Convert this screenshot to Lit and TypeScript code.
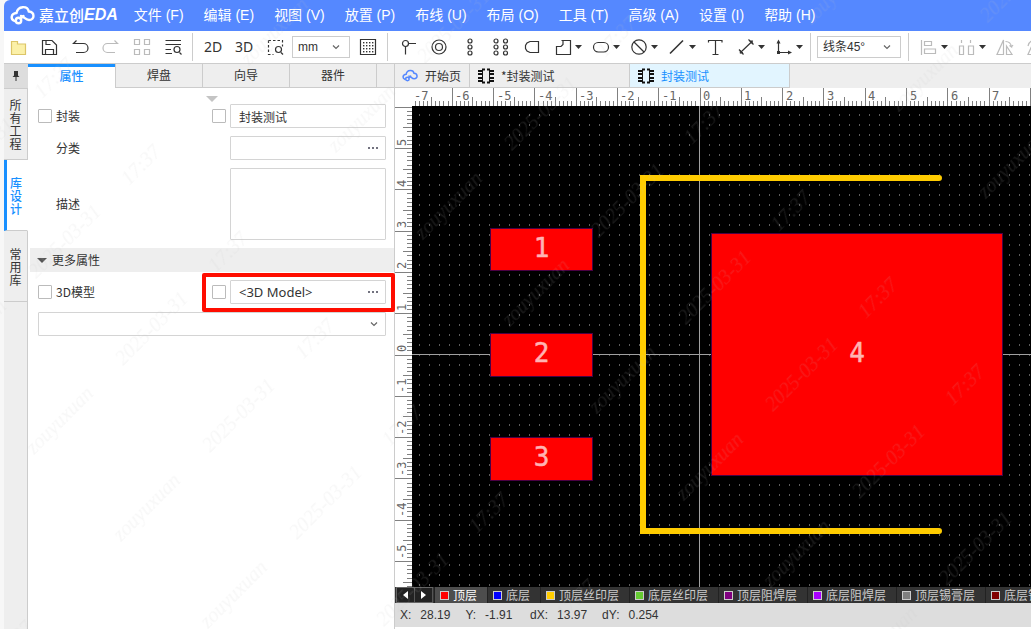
import { LitElement, html, svg, css } from "lit";
import { customElement, property, state } from "lit/decorators.js";
import { classMap } from "lit/directives/class-map.js";

const MENUS = ["文件 (F)", "编辑 (E)", "视图 (V)", "放置 (P)", "布线 (U)", "布局 (O)", "工具 (T)", "高级 (A)", "设置 (I)", "帮助 (H)"];

const circles = (pts: number[][], r: number) => pts.map(([x, y]) => svg`<circle cx=${x} cy=${y} r=${r} />`);

// Toolbar glyphs, all drawn on a 24 x 24 board.
const ICONS: Record<string, unknown> = {
  folder: svg`<path d="M5.5 6.500h6v2.500h8v10.500h-14z" fill="#fbf0a8" stroke="#dcc568"/>`,
  save: svg`<path d="M5.500 5.500h9.500l4.500 4.500v9.500h-14z"/><path d="M8.500 19.500v-5h8v5M9 5.500v4h4.500"/>`,
  undo: svg`<path d="M8.500 5.500L5.500 8.500H15.500a4.500 4.500 0 0 1 0 9H8"/>`,
  redo: svg`<path d="M15.500 5.500L18.500 8.500H8.500a4.500 4.500 0 0 0 0 9H16"/>`,
  cells: svg`<path d="M4.500 4.500h5v5h-5zM14.500 4.500h5v5h-5zM4.500 14.500h5v5h-5zM14.500 14.500h5v5h-5z"/>`,
  find: svg`<path d="M4.500 5.500H20M4.500 9.500H20M4.500 14.500H10M4.500 18.500H11M18.500 17.500L20.500 19.500"/><circle cx="16" cy="14.500" r="3"/>`,
  area: svg`<path d="M5.500 5.500h14v6M5.500 5.500v14h5" stroke-dasharray="2.500 2"/><circle cx="15.500" cy="14.500" r="3"/><path d="M18 17.500L20 19.500"/>`,
  grid: svg`<path d="M4.500 4.500h15v15h-15z"/><g fill="#333" stroke="none">${[7, 10, 13, 16].map((y) => [7, 10, 13, 16].map((x) => svg`<rect x=${x} y=${y} width="1.400" height="1.400"/>`))}</g>`,
  pin: svg`<circle cx="9.500" cy="8.500" r="3"/><path d="M12.500 8.500H20M9.500 11.500V19.500"/>`,
  ring: svg`<circle cx="12" cy="12" r="7"/><circle cx="12" cy="12" r="3.500"/>`,
  pads3: circles([[12, 6], [12, 12], [12, 18]], 2),
  pads6: circles([[7, 6], [7, 12], [7, 18], [16.5, 6], [16.5, 12], [16.5, 18]], 2),
  dshape: svg`<path d="M18.500 6.500v11H10l-3-1.500-1.500-2.500v-3L7 8l3-1.500z"/>`,
  poly: svg`<path d="M10.500 5.500h9v14h-14v-8h4.500l2-2V5.500"/>`,
  oval: svg`<rect x="4.500" y="7.500" width="15" height="9.500" rx="4.700"/>`,
  forbid: svg`<circle cx="12" cy="12" r="7.200"/><path d="M7 7L17 17"/>`,
  line: svg`<path d="M5 18.500L18 5.500" stroke-width="1.600"/>`,
  text: svg`<path d="M5.500 7.500v-2h13.500v2M12.500 5.500v13.500M9.500 19.500h6"/>`,
  measure: svg`<path d="M7 17L17.500 7M5 14.500L9.500 19.500M14.500 4.500L19.500 9.500"/><path d="M6 18.300l.3-3 2.700 2.700zM18.600 5.700l-3 .3 2.700 2.700z" fill="#333" stroke-width="0.600"/>`,
  axes: svg`<path d="M6.500 6V17.500H18"/><path d="M4.500 8.500l2-4 2 4zM16 15.500l4 2-4 2z" fill="#333" stroke="none"/><rect x="5" y="16" width="3" height="3" fill="#333" stroke="none"/>`,
  align: svg`<path d="M4.500 5v15M7.500 6.500h7v4h-7zM7.500 14h11v4.500h-11z"/>`,
  spread: svg`<path d="M6.500 5v3M15.500 5v3M4.500 11h4v8.500h-4zM13.500 11h5v8.500h-5z"/>`,
  flip: svg`<path d="M10.500 5L4 19.500h6.500zM13.500 11l5.500 8.500h-5.500zM12.500 6.500c3.500 0 5.500 2 6 5.500l-2-1.500M18.500 12l1.500-2"/>`,
  rotate: svg`<path d="M4 11c1-4 4-6 8-6M4 19.500h12l-8-9z"/>`,
};

type Tool = { icon: string; name: string; dim?: boolean; menu?: boolean };
const t = (icon: string, name: string, opts: Partial<Tool> = {}): Tool => ({ icon, name, ...opts });

const FILE_TOOLS = [t("folder", "打开"), t("save", "保存"), t("undo", "撤销"), t("redo", "重做", { dim: true }), t("cells", "阵列", { dim: true }), t("find", "查找")];
const DRAW_TOOLS = [
  t("pin", "引脚"), t("ring", "焊盘"), t("pads3", "单列焊盘"), t("pads6", "双列焊盘"), t("dshape", "异形焊盘"),
  t("poly", "填充", { menu: true }), t("oval", "挖槽", { menu: true }), t("forbid", "禁止区域", { menu: true }), t("line", "线条", { menu: true }),
  t("text", "文本"), t("measure", "尺寸", { menu: true }), t("axes", "原点", { menu: true }),
];
const ALIGN_TOOLS = [t("align", "对齐", { dim: true, menu: true }), t("spread", "分布", { dim: true, menu: true }), t("flip", "翻转", { dim: true }), t("rotate", "旋转", { dim: true })];

const LAYERS = [
  ["顶层", "#ff0000"], ["底层", "#0000ff"], ["顶层丝印层", "#ffcc00"], ["底层丝印层", "#66cc33"],
  ["顶层阻焊层", "#800080"], ["底层阻焊层", "#aa00ff"], ["顶层锡膏层", "#808080"], ["底层锡膏层", "#800000"],
];

const chevron = html`<svg class="chev" viewBox="0 0 8 8" aria-hidden="true"><path d="M1 2.500L4 5.500L7 2.500" fill="none" stroke="#666" stroke-width="1.200"/></svg>`;

const cloud = (cls: string) => html`<svg class=${cls} viewBox="0 0 25 20" aria-hidden="true">
  <g fill="none" stroke="currentColor" stroke-width="2.400" stroke-linecap="round">
    <path d="M4.500 16C0.500 14.500 0.500 8.500 6.500 8C8 0.500 17.500 0.500 18.800 6.500C25 7 25 15 19 15C15.500 15 14 11.500 11 11"/>
    <circle cx="8.500" cy="15.500" r="2.700"/><path d="M10.500 13.500L13.500 11"/>
  </g></svg>`;

const chip = html`<svg class="chip" viewBox="0 0 16 16" aria-hidden="true">
  <g fill="#111">${[2, 5, 9, 12].map((y) => svg`<rect x="0" y=${y} width="4" height="2"/><rect x="12" y=${y} width="4" height="2"/>`)}</g>
  <path d="M4 1.500H7M9 1.500H12M4 14.500H7M9 14.500H12" fill="none" stroke="#111" stroke-width="2"/>
  <path d="M4.500 1V15M11.500 1V15" stroke="#111" stroke-width="1"/></svg>`;

/** Application menu with the brand mark. */
@customElement("menu-bar")
class MenuBar extends LitElement {
  static styles = css`
    :host { display: block; }
    .bar { height: 31px; box-sizing: border-box; display: flex; align-items: center; background: #5588ff; color: #fff; border-top-left-radius: 6px; overflow: hidden; padding: 0 0 2px 6px; }
    .mark { width: 25px; height: 20px; flex: none; margin-right: 4px; }
    .brand { display: flex; align-items: center; font: italic 700 16px/20px "Liberation Sans", sans-serif; margin-right: 16px; white-space: nowrap; }
    .cn { font: 500 15px/20px "Noto Sans CJK SC", sans-serif; }
    .items { display: flex; gap: 20px; }
    .item { border: 0; padding: 0; background: none; color: #fff; font: 14px/20px "Liberation Sans", "Noto Sans CJK SC", sans-serif; white-space: nowrap; }
  `;
  render() {
    return html`<header class="bar">
      ${cloud("mark")}<div class="brand"><span class="cn">嘉立创</span><span>EDA</span></div>
      <nav class="items">${MENUS.map((m) => html`<button class="item">${m}</button>`)}</nav>
    </header>`;
  }
}

/** Icon tool strip below the menu. */
@customElement("tool-bar")
class ToolBar extends LitElement {
  static styles = css`
    :host { display: block; }
    .bar { height: 32px; display: flex; align-items: center; background: #fff; border-bottom: 1px solid #ccc; padding-left: 2px; overflow: hidden; }
    .group { display: flex; gap: 7px; flex: none; }
    .tool { display: flex; align-items: center; border: 0; padding: 0; background: none; height: 24px; color: #333; }
    .tool.dim .icon { color: #bbb; }
    .icon { width: 24px; height: 24px; flex: none; }
    .caret { width: 7px; height: 4px; flex: none; }
    .word { width: 24px; justify-content: center; font: 14px/24px "Noto Sans", sans-serif; }
    .sep { flex: none; width: 1px; height: 28px; background: #ccc; margin: 0 8px 0 7px; }
    .pick { position: relative; display: flex; flex: none; margin: 0 6px 0 5px; width: 58px; }
    .pick.angle { width: 84px; margin: 0 0 0 -2px; }
    select { appearance: none; width: 100%; height: 22px; border: 1px solid #ccc; border-radius: 0; background: #fff; color: #333; padding: 0 5px; font: 12px/20px "Liberation Sans", "Noto Sans CJK SC", sans-serif; }
    .chev { position: absolute; right: 10px; top: 7px; width: 8px; height: 8px; pointer-events: none; }
  `;
  private tool(x: Tool) {
    return html`<button class=${classMap({ tool: true, dim: !!x.dim })} aria-label=${x.name}>
      <svg class="icon" viewBox="0 0 24 24" fill="none" stroke="currentColor" stroke-width="1.200">${ICONS[x.icon]}</svg>
      ${x.menu ? html`<svg class="caret" viewBox="0 0 7 4"><path d="M0 0H7L3.500 4z" fill="#333"/></svg>` : null}
    </button>`;
  }
  render() {
    return html`<div class="bar" role="toolbar">
      <div class="group">${FILE_TOOLS.map((x) => this.tool(x))}</div><i class="sep"></i>
      <div class="group"><button class="tool word">2D</button><button class="tool word">3D</button>${this.tool(t("area", "框选缩放"))}</div>
      <label class="pick"><select aria-label="单位"><option>mm</option><option>mil</option></select>${chevron}</label>
      ${this.tool(t("grid", "网格"))}<i class="sep"></i>
      <div class="group">${DRAW_TOOLS.map((x) => this.tool(x))}</div><i class="sep"></i>
      <label class="pick angle"><select aria-label="布线拐角"><option>线条45°</option><option>线条90°</option></select>${chevron}</label><i class="sep"></i>
      <div class="group">${ALIGN_TOOLS.map((x) => this.tool(x))}</div>
    </div>`;
  }
}

/** Vertical tabs and the property form. */
@customElement("side-panel")
class SidePanel extends LitElement {
  static styles = css`
    :host { display: flex; flex: none; background: #fff; font: 12px/16px "Noto Sans CJK SC", sans-serif; color: #333; }
    button { font: inherit; color: inherit; border: 0; padding: 0; margin: 0; background: none; }
    .rail { width: 24px; background: #eee; display: flex; flex-direction: column; }
    .pin { height: 25px; background: #ddd; border-bottom: 1px solid #ccc; display: flex; align-items: center; justify-content: center; }
    .pin svg { width: 8px; height: 12px; }
    .vtab { display: flex; align-items: center; justify-content: center; height: 71px; border-right: 1px solid #ccc; border-bottom: 1px solid #ccc; }
    .vtab span { width: 12px; line-height: 13px; word-break: break-all; }
    .vtab.on { background: #fff; color: #1890ff; font-weight: 500; border-left: 3px solid #1890ff; border-right-color: #fff; padding-right: 2px; }
    .rest { flex: 1; border-right: 1px solid #ccc; }
    .panel { width: 366px; border-right: 1px solid #ccc; }
    .tabs { display: flex; height: 24px; background: #eee; }
    .tab { width: 87px; border-left: 1px solid #ccc; border-bottom: 1px solid #ccc; padding-bottom: 1px; }
    .tab.on { background: #fff; color: #1890ff; font-weight: 500; border: 0; border-top: 3px solid #1890ff; padding-bottom: 3px; }
    .fill { flex: 1; border-left: 1px solid #ccc; border-bottom: 1px solid #ccc; }
    .drop { display: block; width: 12px; height: 6px; margin: 8px 0 2px 178px; }
    .form { display: flex; flex-direction: column; gap: 8px; }
    .row { display: flex; align-items: center; padding: 0 8px 0 10px; }
    .name { width: 174px; flex: none; display: flex; align-items: center; gap: 4px; }
    .name.plain { padding-left: 18px; width: 156px; }
    .value { flex: 1; display: flex; align-items: center; gap: 4px; position: relative; }
    .value.plain { padding-left: 18px; }
    input[type="checkbox"] { appearance: none; width: 14px; height: 14px; margin: 0; border: 1px solid #bbb; border-radius: 1px; background: #fff; flex: none; }
    .box { position: relative; flex: 1; display: flex; }
    .field { width: 100%; min-width: 0; height: 24px; box-sizing: border-box; margin: 0; border: 1px solid #d4d4d4; border-radius: 1px; background: #fff; color: #333; font: inherit; padding: 0 8px; }
    .field.latin { font: 13px/16px "Noto Sans", "Noto Sans CJK SC", sans-serif; }
    .field.area { height: 72px; resize: none; }
    select.field { appearance: none; }
    .more { position: absolute; right: 6px; top: 4px; width: 14px; height: 16px; }
    .more svg { display: block; width: 14px; height: 14px; }
    .chev { position: absolute; right: 8px; top: 8px; width: 8px; height: 8px; pointer-events: none; }
    .head { display: flex; align-items: center; gap: 5px; height: 24px; background: #eee; margin-left: 2px; padding-left: 7px; }
    .head svg { width: 10px; height: 5px; }
    .mark { position: absolute; inset: -7px -9px -8px -10px; border: 4px solid #ff0d00; border-radius: 2px; pointer-events: none; z-index: 2; box-sizing: border-box; }
  `;
  render() {
    const more = html`<button class="more" aria-label="选择"><svg viewBox="0 0 14 14"><path d="M2 7h2M6 7h2M10 7h2" stroke="#445" stroke-width="1.500"/></svg></button>`;
    return html`
      <div class="rail">
        <button class="pin" aria-label="固定"><svg viewBox="0 0 8 12"><path d="M2 1h4v4.500l1.500 1.500h-7l1.500-1.500zM3.500 7h1v4h-1z" fill="#333"/></svg></button>
        <button class="vtab"><span>所有工程</span></button><button class="vtab on"><span>库设计</span></button><button class="vtab"><span>常用库</span></button>
        <div class="rest"></div>
      </div>
      <div class="panel">
        <div class="tabs">
          ${["属性", "焊盘", "向导", "器件"].map((x, i) => html`<button class=${classMap({ tab: true, on: i === 0 })}>${x}</button>`)}
          <div class="fill"></div>
        </div>
        <svg class="drop" viewBox="0 0 12 6" aria-hidden="true"><path d="M0 0H12L6 6z" fill="#c4c4c4"/></svg>
        <form class="form">
          <div class="row"><label class="name"><input type="checkbox" />封装</label>
            <div class="value"><input type="checkbox" aria-label="应用封装" /><div class="box"><input class="field" aria-label="封装" value="封装测试" /></div></div></div>
          <div class="row"><label class="name plain" for="kind">分类</label>
            <div class="value plain"><div class="box"><input class="field" id="kind" />${more}</div></div></div>
          <div class="row"><label class="name plain" for="desc">描述</label>
            <div class="value plain"><div class="box"><textarea class="field area" id="desc"></textarea></div></div></div>
          <div class="head"><svg viewBox="0 0 10 5"><path d="M0 0H10L5 5z" fill="#555"/></svg>更多属性</div>
          <div class="row"><label class="name"><input type="checkbox" />3D模型</label>
            <div class="value"><input type="checkbox" aria-label="应用3D模型" /><div class="box"><input class="field latin" aria-label="3D模型" value="&lt;3D Model&gt;" />${more}</div><div class="mark"></div></div></div>
          <div class="row"><div class="box"><select class="field" aria-label="添加属性"><option></option></select>${chevron}</div></div>
        </form>
      </div>`;
  }
}

/** Footprint drawing area with its two rulers. */
@customElement("pcb-canvas")
class PcbCanvas extends LitElement {
  /** Origin of the drawing in canvas pixels, and pixels per millimetre. */
  @property({ type: Number }) ox = 288;
  @property({ type: Number }) oy = 249;
  @property({ type: Number }) unit = 41.3;
  @state() private w = 0;
  @state() private h = 0;
  private watcher?: ResizeObserver;

  static styles = css`
    :host { display: grid; grid-template: 18px minmax(0, 1fr) / 17px minmax(0, 1fr); flex: 1; min-height: 0; background: #fff; }
    svg { display: block; width: 100%; height: 100%; overflow: hidden; }
    .wrap { min-width: 0; min-height: 0; overflow: hidden; contain: size; }
    .top { grid-column: 2; }
    .side { grid-row: 2; }
    .main { background: #000; }
    .tick { stroke: #808080; stroke-width: 1; }
    .num { font: 12px "DejaVu Sans Mono", monospace; fill: #666; }
    .pad { fill: #f00; stroke: #4a0044; stroke-width: 1; }
    .id { font: 26px "DejaVu Sans Mono", monospace; fill: #ffb3b3; stroke: #ffb3b3; stroke-width: 0.5; text-anchor: middle; }
    .silk { fill: none; stroke: #ffcc00; stroke-width: 6; stroke-linecap: round; }
    .axis { stroke: #a0a0a0; stroke-width: 1; }
  `;
  firstUpdated() {
    const measure = () => {
      this.w = this.clientWidth - 17;
      this.h = this.clientHeight - 18;
    };
    measure();
    this.watcher = new ResizeObserver(measure);
    this.watcher.observe(this);
  }
  disconnectedCallback() {
    super.disconnectedCallback();
    this.watcher?.disconnect();
  }
  private ticks(origin: number, size: number) {
    const out: { p: number; len: number }[] = [];
    const step = this.unit / 10;
    for (let i = Math.ceil(-origin / step); origin + i * step < size; i++) {
      out.push({ p: Math.floor(origin + i * step) + 0.5, len: i % 10 === 0 ? 18 : i % 5 === 0 ? 9 : 5 });
    }
    return out;
  }
  /** Whole numbers whose label fits between the ruler's ends. */
  private marks(origin: number, size: number, before: number, after: number) {
    const out: { n: number; p: number }[] = [];
    for (let n = Math.floor(-origin / this.unit); origin + n * this.unit < size + before; n++) {
      const p = Math.round(origin + n * this.unit);
      if (p - before >= -2 && p + after <= size) out.push({ n, p });
    }
    return out;
  }
  render() {
    const pads = [[79, 123, 101, 41], [79, 228, 101, 42], [79, 332, 101, 42], [300, 128, 290, 241]];
    return html`
      <div class="wrap top"><svg>
        ${this.ticks(this.ox, this.w).map((x) => svg`<line class="tick" x1=${x.p} x2=${x.p} y1=${18 - x.len} y2="18"/>`)}
        ${this.marks(this.ox, this.w, 0, 12).map((m) => svg`<text class="num" x=${m.p + 3} y="12">${m.n}</text>`)}
      </svg></div>
      <div class="wrap side"><svg>
        ${this.ticks(this.oy, this.h).map((y) => svg`<line class="tick" y1=${y.p} y2=${y.p} x1=${17 - y.len} x2="17"/>`)}
        ${this.marks(this.oy, this.h, 18, 0).map((m) => svg`<text class="num" transform="translate(11 ${m.p - 3}) rotate(-90)">${-m.n}</text>`)}
      </svg></div>
      <div class="wrap main"><svg>
        <defs><pattern id="dots" width="10" height="10" patternUnits="userSpaceOnUse"><rect x="7" y="8" width="1" height="2" fill="#5c5c5c"/></pattern></defs>
        <rect width="100%" height="100%" fill="url(#dots)"/>
        <line class="axis" x1=${this.ox - 0.5} x2=${this.ox - 0.5} y1="0" y2="100%"/>
        <line class="axis" x1="0" x2="100%" y1=${this.oy - 0.5} y2=${this.oy - 0.5}/>
        ${pads.map(([x, y, w, h], i) => svg`<rect class="pad" x=${x - 0.5} y=${y - 0.5} width=${w + 1} height=${h + 1}/>
          <text class="id" x=${x + w / 2} y=${Math.round(y + h / 2 + 7)}>${i + 1}</text>`)}
        <path class="silk" stroke-linejoin="miter" d="M527 72H231V425H527"/>
      </svg></div>`;
  }
}

/** Document tabs, drawing, layer strip and coordinate readout. */
@customElement("editor-pane")
class EditorPane extends LitElement {
  static styles = css`
    :host { display: flex; flex-direction: column; flex: 1; min-width: 0; font: 12px/16px "Noto Sans CJK SC", sans-serif; color: #333; }
    button { font: inherit; color: inherit; border: 0; padding: 0; margin: 0; background: none; white-space: nowrap; }
    .tabs { display: flex; height: 24px; background: #eee; }
    .tab { display: flex; align-items: center; gap: 7px; padding: 0 8px 0 7px; border-right: 1px solid #ccc; border-bottom: 1px solid #ccc; }
    .tab.doc { width: 160px; padding-left: 8px; box-sizing: border-box; }
    .tab.on { background: #e2f5ff; color: #1890ff; }
    .home { width: 16px; height: 13px; color: #5588ff; }
    .chip { width: 16px; height: 16px; }
    .layers { display: flex; height: 16px; background: #333; color: #ccc; overflow: hidden; }
    .nav { display: flex; flex: none; width: 36px; height: 14px; margin: 0 1px; border: 1px solid #666; border-right-width: 0; background: #222; box-sizing: content-box; }
    .arrow { flex: 1; display: flex; align-items: center; justify-content: center; border-right: 1px solid #555; }
    .arrow svg { width: 5px; height: 8px; }
    .layer { display: flex; align-items: center; gap: 4px; flex: none; padding: 0 10px 0 5px; border-left: 1px solid #222; line-height: 16px; }
    .layer.on { background: #4d4d4d; color: #fff; }
    .swatch { width: 9px; height: 9px; border: 1px solid #ccc; box-sizing: border-box; }
    .status { display: flex; align-items: center; gap: 15px; height: 24px; background: #ddd; padding-left: 5px; font: 12px/16px "Liberation Sans", sans-serif; margin-bottom: 2px; white-space: nowrap; }
    .pair { display: flex; gap: 9px; }
    .num { min-width: 30px; }
  `;
  render() {
    return html`
      <div class="tabs">
        <button class="tab">${cloud("home")}开始页</button>
        <button class="tab doc">${chip}*封装测试</button>
        <button class="tab doc on">${chip}封装测试</button>
      </div>
      <pcb-canvas></pcb-canvas>
      <div class="layers">
        <div class="nav">
          <button class="arrow" aria-label="向左"><svg viewBox="0 0 5 8"><path d="M5 0V8L0 4z" fill="#fff"/></svg></button>
          <button class="arrow" aria-label="向右"><svg viewBox="0 0 5 8"><path d="M0 0V8L5 4z" fill="#fff"/></svg></button>
        </div>
        ${LAYERS.map(([n, c], i) => html`<button class=${classMap({ layer: true, on: i === 0 })}><i class="swatch" style="background:${c}"></i>${n}</button>`)}
      </div>
      <div class="status">
        ${[["X:", "28.19"], ["Y:", "-1.91"], ["dX:", "13.97"], ["dY:", "0.254"]].map(([k, v]) => html`<span class="pair"><span>${k}</span><span class="num">${v}</span></span>`)}
      </div>`;
  }
}

@customElement("app-root")
class AppRoot extends LitElement {
  static styles = css`
    :host { display: flex; flex-direction: column; height: 100vh; box-sizing: border-box; padding-left: 4px; background: #f7f7f7; position: relative; overflow: hidden; }
    .body { display: flex; flex: 1; min-height: 0; background: #fff; }
    .water { position: absolute; inset: 0; width: 100%; height: 100%; pointer-events: none; z-index: 5; }
    .water text { font: italic 20px "Liberation Serif", serif; fill: #c4c4c4; fill-opacity: 0.13; text-anchor: middle; }
  `;
  render() {
    return html`
      <menu-bar></menu-bar>
      <tool-bar></tool-bar>
      <div class="body"><side-panel></side-panel><editor-pane></editor-pane></div>
      <svg class="water" aria-hidden="true">
        <defs><pattern id="wm" x="100" y="0" width="427" height="123" patternUnits="userSpaceOnUse" patternTransform="rotate(-45)">
          <text x="72" y="100">zouyuxuan</text><text x="202" y="100">2025-03-31</text><text x="310" y="100">17:37</text>
        </pattern></defs>
        <rect width="100%" height="100%" fill="url(#wm)"/>
      </svg>`;
  }
}
